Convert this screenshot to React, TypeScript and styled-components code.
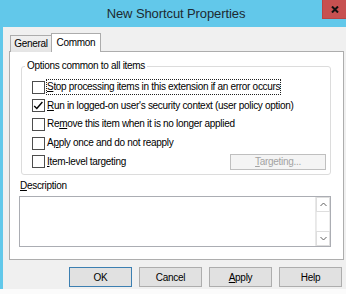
import React from 'react';
import styled, { createGlobalStyle } from 'styled-components';

const GlobalStyle = createGlobalStyle`
  html, body {
    margin: 0;
    padding: 0;
    background: #fbfbfb;
  }
  body {
    font-family: 'Liberation Sans', Arial, sans-serif;
    font-size: 10px;
    color: #000;
  }
  * {
    box-sizing: border-box;
  }
`;

const Window = styled.div`
  width: 346px;
  display: flex;
  flex-direction: column;
`;

const TitleBar = styled.div`
  height: 27px;
  background: #62c8ea;
  display: flex;
  align-items: flex-start;
`;

const Title = styled.div`
  flex: 1;
  padding-left: 30px;
  text-align: center;
  font-size: 13px;
  line-height: 27px;
  letter-spacing: -0.1px;
  color: #1d2a31;
  white-space: nowrap;
`;

const CloseButton = styled.div`
  flex: none;
  width: 24px;
  height: 19px;
  background: #c75050;
  border-left: 1px solid #b84545;
  border-bottom: 1px solid #b84545;
  display: flex;
  align-items: center;
  justify-content: center;
`;

const Body = styled.div`
  height: 262px;
  background: #f0f0f0;
  border-left: 3px solid #62c8ea;
  padding: 6px 2px 2px 6px;
  display: flex;
  flex-direction: column;
`;

const TabStrip = styled.div`
  display: flex;
  align-items: flex-end;
  height: 19px;
  margin: 0 0 -1px 1px;
`;

const Tab = styled.div<{ $active?: boolean; $width: number }>`
  position: relative;
  z-index: ${(p) => (p.$active ? 1 : 0)};
  width: ${(p) => p.$width}px;
  height: ${(p) => (p.$active ? 19 : 17)}px;
  margin-left: ${(p) => (p.$active ? -1 : 0)}px;
  line-height: ${(p) => (p.$active ? 18 : 16)}px;
  text-align: center;
  border: 1px solid #acacac;
  border-bottom: none;
  background: ${(p) => (p.$active ? '#fff' : 'linear-gradient(#f0f0f0, #e5e5e5)')};
  letter-spacing: -0.3px;
`;

const Panel = styled.div`
  width: 335px;
  height: 209px;
  border: 1px solid #adadad;
  background: #fff;
  padding-left: 9px;
  display: flex;
  flex-direction: column;
`;

const Group = styled.fieldset`
  margin: 8px 0 0 2px;
  width: 310px;
  min-width: 0;
  padding: 6px 4px 3px 0;
  border: 1px solid #dcdcdc;
  border-radius: 3px;
`;

const Legend = styled.legend`
  margin-left: 3px;
  padding: 0 2px;
  line-height: 12px;
  letter-spacing: -0.3px;
`;

const OptionList = styled.div`
  padding-left: 10px;
`;

const OptionRow = styled.div`
  display: flex;
  align-items: center;
  height: 18.6px;
`;

const CheckBox = styled.span`
  flex: none;
  width: 13px;
  height: 13px;
  margin-right: 1px;
  border: 1px solid #4d4d4d;
  background: #fff;
  display: flex;
  align-items: center;
  justify-content: center;
`;

const OptionLabel = styled.span<{ $focused?: boolean }>`
  border: 1px ${(p) => (p.$focused ? 'dotted #202020' : 'solid transparent')};
  line-height: 14px;
  white-space: nowrap;
  letter-spacing: -0.3px;
`;

const Key = styled.span`
  text-decoration: underline;
`;

const SmallButton = styled.button`
  margin-left: auto;
  width: 96px;
  height: 16px;
  padding: 0;
  border: 1px solid #bfbfbf;
  background: #f4f4f4;
  color: #a3a3a3;
  font: inherit;
  letter-spacing: -0.3px;
`;

const FieldLabel = styled.div`
  margin-top: 5px;
  padding-left: 1px;
  line-height: 12px;
  letter-spacing: -0.3px;
`;

const TextBox = styled.div`
  margin-top: 4px;
  width: 312px;
  height: 51px;
  border: 1px solid #abadb3;
  background: #fff;
  display: flex;
  justify-content: flex-end;
`;

const ScrollBar = styled.div`
  width: 15px;
  display: flex;
  flex-direction: column;
  background: #fff;
  border-left: 1px solid #e8e8e8;
`;

const ScrollArrow = styled.div`
  height: 15px;
  border: 1px solid #dedede;
  display: flex;
  align-items: center;
  justify-content: center;
  background: #fff;
`;

const ScrollTrack = styled.div`
  flex: 1;
  border-left: 1px solid #ececec;
  border-right: 1px solid #ececec;
`;

const ButtonRow = styled.div`
  display: flex;
  justify-content: flex-end;
  gap: 7px;
  margin-top: 7px;
  padding-right: 2px;
`;

const DialogButton = styled.button<{ $default?: boolean }>`
  width: 63px;
  height: 20px;
  padding: 0;
  border: 1px solid ${(p) => (p.$default ? '#3c7fb1' : '#adadad')};
  background: #e1e1e1;
  color: #000;
  font: inherit;
  letter-spacing: -0.3px;
`;

const Tick = () => (
  <svg width="11" height="11" viewBox="0 0 11 11">
    <path d="M1.2 6 L3.8 8.4 L9.4 2" fill="none" stroke="#000" strokeWidth="1.4" />
  </svg>
);

const Chevron = ({ up }: { up?: boolean }) => (
  <svg width="7" height="5" viewBox="0 0 7 5">
    <polyline
      points={up ? '0.5,4 3.5,1 6.5,4' : '0.5,1 3.5,4 6.5,1'}
      fill="none"
      stroke="#606060"
      strokeWidth="1"
    />
  </svg>
);

const options: { label: React.ReactNode; checked?: boolean; focused?: boolean }[] = [
  {
    label: (
      <>
        <Key>S</Key>top processing items in this extension if an error occurs
      </>
    ),
    focused: true,
  },
  {
    label: (
      <>
        <Key>R</Key>un in logged-on user's security context (user policy option)
      </>
    ),
    checked: true,
  },
  {
    label: (
      <>
        Re<Key>m</Key>ove this item when it is no longer applied
      </>
    ),
  },
  {
    label: (
      <>
        A<Key>p</Key>ply once and do not reapply
      </>
    ),
  },
];

export default function App() {
  return (
    <>
      <GlobalStyle />
      <Window>
        <TitleBar>
          <Title>New Shortcut Properties</Title>
          <CloseButton>
            <svg width="8" height="7" viewBox="0 0 8 7">
              <path d="M1 0.5 L7 6.5 M7 0.5 L1 6.5" stroke="#111" strokeWidth="2" />
            </svg>
          </CloseButton>
        </TitleBar>
        <Body>
          <TabStrip>
            <Tab $width={42}>General</Tab>
            <Tab $width={50} $active>
              Common
            </Tab>
          </TabStrip>
          <Panel>
            <Group>
              <Legend>Options common to all items</Legend>
              <OptionList>
                {options.map((o, i) => (
                  <OptionRow key={i}>
                    <CheckBox>{o.checked ? <Tick /> : null}</CheckBox>
                    <OptionLabel $focused={o.focused}>{o.label}</OptionLabel>
                  </OptionRow>
                ))}
                <OptionRow>
                  <CheckBox />
                  <OptionLabel>
                    <Key>I</Key>tem-level targeting
                  </OptionLabel>
                  <SmallButton disabled>
                    <Key>T</Key>argeting...
                  </SmallButton>
                </OptionRow>
              </OptionList>
            </Group>
            <FieldLabel>
              <Key>D</Key>escription
            </FieldLabel>
            <TextBox>
              <ScrollBar>
                <ScrollArrow>
                  <Chevron up />
                </ScrollArrow>
                <ScrollTrack />
                <ScrollArrow>
                  <Chevron />
                </ScrollArrow>
              </ScrollBar>
            </TextBox>
          </Panel>
          <ButtonRow>
            <DialogButton $default>OK</DialogButton>
            <DialogButton>Cancel</DialogButton>
            <DialogButton>
              <Key>A</Key>pply
            </DialogButton>
            <DialogButton>Help</DialogButton>
          </ButtonRow>
        </Body>
      </Window>
    </>
  );
}
